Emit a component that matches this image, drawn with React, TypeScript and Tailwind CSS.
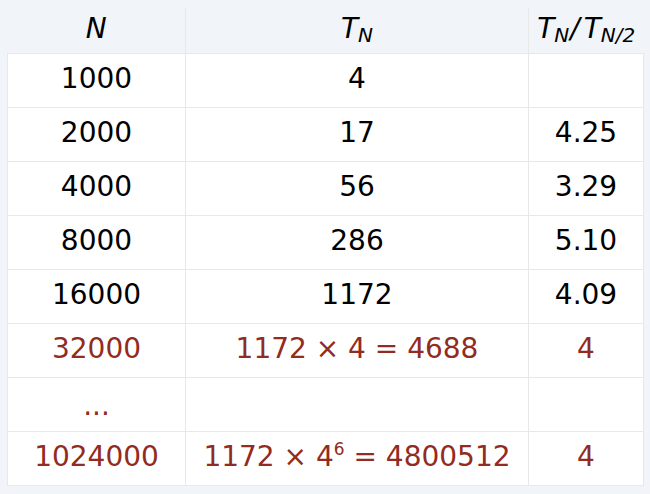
import React from "react";

const RED = "text-[#922b21]";

function Cell({ children, className = "" }: { children?: React.ReactNode; className?: string }) {
  return (
    <td className={`h-[54px] border border-[#e8e8e8] text-center align-middle p-0 pb-[2px] ${className}`}>{children}</td>
  );
}

function Row({ a, b, c, red }: { a: React.ReactNode; b?: React.ReactNode; c?: React.ReactNode; red?: boolean }) {
  const col = red ? RED : "text-black";
  return (
    <tr className="bg-white">
      <Cell className={col}>{a}</Cell>
      <Cell className={col}>{b}</Cell>
      <Cell className={col}>{c}</Cell>
    </tr>
  );
}

export default function App() {
  return (
    <div className="w-[650px] h-[494px] bg-[#f1f4f8] pt-[8px] pl-[7px] pr-[7px] pb-[8px]" style={{ fontFamily: '"DejaVu Sans", sans-serif' }}>
      <table className="border-collapse table-fixed w-[636px] text-[28px] leading-none">
        <colgroup>
          <col className="w-[178px]" />
          <col className="w-[343px]" />
          <col className="w-[115px]" />
        </colgroup>
        <thead>
          <tr className="bg-[#f1f4f8]">
            <th className="h-[45px] border border-[#e8e8e8] border-t-0 border-l-0 font-normal italic text-black p-0 pb-[2px]">N</th>
            <th className="h-[45px] border border-[#e8e8e8] border-t-0 font-normal text-black p-0 pb-[2px]">
              <span className="italic">T</span>
              <span className="italic text-[20px] relative top-[4px]">N</span>
            </th>
            <th className="h-[45px] border border-[#e8e8e8] border-t-0 border-r-0 font-normal text-black p-0 pb-[2px] whitespace-nowrap">
              <span className="italic">T</span>
              <span className="italic text-[20px] relative top-[4px]">N</span>
              <span className="italic ml-[1px] mr-[4px]">/</span>
              <span className="italic">T</span>
              <span className="italic text-[20px] relative top-[4px]">N/2</span>
            </th>
          </tr>
        </thead>
        <tbody>
          <Row a="1000" b="4" c="" />
          <Row a="2000" b="17" c="4.25" />
          <Row a="4000" b="56" c="3.29" />
          <Row a="8000" b="286" c="5.10" />
          <Row a="16000" b="1172" c="4.09" />
          <Row red a="32000" b={<span>1172 × 4 = 4688</span>} c="4" />
          <Row red a={<span className="relative top-[3px]">...</span>} b="" c="" />
          <Row
            red
            a="1024000"
            b={
              <span>
                1172 × 4<span className="text-[17px] relative top-[-11px]">6</span> = 4800512
              </span>
            }
            c="4"
          />
        </tbody>
      </table>
    </div>
  );
}
